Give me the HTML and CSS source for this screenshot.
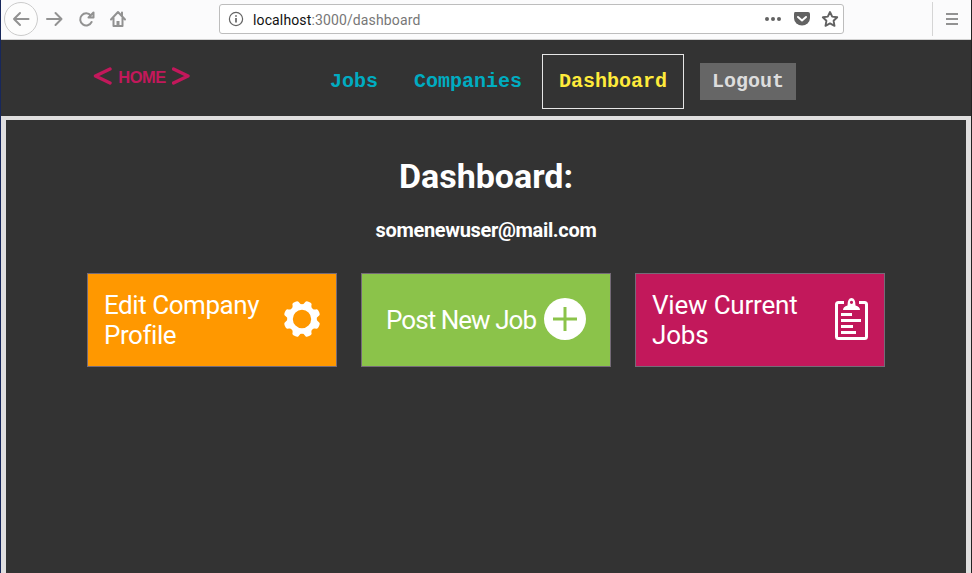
FILE: index.html
```html
<!DOCTYPE html>
<html lang="en">
<head>
<meta charset="utf-8">
<title>Dashboard</title>
<link rel="stylesheet" href="styles.css">
</head>
<body>
<div class="window">
  <div class="toolbar">
    <svg class="controls" width="140" height="39" viewBox="0 0 140 39" fill="none" stroke="#929292" stroke-width="2" stroke-linecap="round" stroke-linejoin="round">
      <circle cx="20" cy="19" r="16.5" stroke="#ccc" stroke-width="1" fill="#fdfdfd"/>
      <path d="M27.5 19H13m6-6-6 6 6 6M46 19h14.500m-6-6 6 6-6 6"/>
      <path d="M89.800 15.500A6 6 0 1 0 90.600 22M92.500 12.500v5h-5z"/>
      <path d="M110 19.500l7-7.500 7 7.500M112.500 18v8h9v-8M121 12.500v3"/>
      <path d="M117 26v-5" stroke-width="3" stroke-linecap="butt"/>
    </svg>
    <div class="address">
      <svg class="info" width="16" height="16" viewBox="0 0 16 16" fill="none" stroke="#646464">
        <circle cx="8" cy="8" r="6.600" stroke-width="1.200"/>
        <path d="M8 7v4.500M8 4.200v1.600" stroke-width="1.700"/>
      </svg>
      <span class="url">localhost<span class="path">:3000/dashboard</span></span>
      <svg class="actions" width="76" height="20" viewBox="0 0 76 20" fill="#626262">
        <circle cx="3" cy="10" r="2"/><circle cx="9" cy="10" r="2"/><circle cx="15" cy="10" r="2"/>
        <path d="M31 3h13q2 0 2 2V9a8 7.500 0 0 1-16 0V5q0-2 1-2z"/>
        <path d="M34 8l4 3.500L42 8" fill="none" stroke="#fff" stroke-width="2" stroke-linecap="round" stroke-linejoin="round"/>
        <path d="M66 3l2.200 4.600 5 .7-3.600 3.500.9 5-4.500-2.400-4.500 2.400.9-5-3.600-3.500 5-.7z" fill="none" stroke="#626262" stroke-width="1.900" stroke-linejoin="round"/>
      </svg>
    </div>
    <div class="menu"><i></i><i></i><i></i></div>
  </div>
  <nav class="nav">
    <a class="brand">
      <svg width="20" height="20" viewBox="0 0 20 20"><path d="M18 3L3.500 10 18 17"/></svg>
      <span>HOME</span>
      <svg width="20" height="20" viewBox="0 0 20 20"><path d="M1.500 3L16 10 1.500 17"/></svg>
    </a>
    <div class="links">
      <a class="link">Jobs</a>
      <a class="link">Companies</a>
      <a class="link current">Dashboard</a>
      <a class="logout">Logout</a>
    </div>
  </nav>
  <main class="main">
    <h1>Dashboard:</h1>
    <h2>somenewuser@mail.com</h2>
    <div class="cards">
      <a class="card edit">
        <span>Edit Company Profile</span>
        <svg width="36" height="36" viewBox="-18 -18 36 36">
          <circle r="12" fill="none" stroke="#fff" stroke-width="5.600"/>
          <g fill="#fff">
            <path id="tooth" d="M-6.500-12Q-3.800-14-3.300-17.200Q-3-18.500 0-18.500Q3-18.500 3.300-17.200Q3.800-14 6.500-12z" transform="rotate(22.500)"/>
            <use href="#tooth" transform="rotate(45)"/><use href="#tooth" transform="rotate(90)"/>
            <use href="#tooth" transform="rotate(135)"/><use href="#tooth" transform="rotate(180)"/>
            <use href="#tooth" transform="rotate(225)"/><use href="#tooth" transform="rotate(270)"/>
            <use href="#tooth" transform="rotate(315)"/>
          </g>
        </svg>
      </a>
      <a class="card post">
        <span>Post New Job</span>
        <svg width="42" height="42" viewBox="0 0 42 42"><circle cx="21" cy="21" r="21" fill="#fff"/><path d="M21 9v24M9 21h24" stroke="#8bc34a" stroke-width="3"/></svg>
      </a>
      <a class="card view">
        <span>View Current Jobs</span>
        <svg width="33" height="42" viewBox="0 0 33 42">
          <path d="M9 4.500H3.500Q1.500 4.500 1.500 6.500v32q0 2 2 2h26q2 0 2-2v-32q0-2-2-2H24" fill="none" stroke="#fff" stroke-width="3"/>
          <path fill="#fff" fill-rule="evenodd" d="M8 12q0-3.500 4.500-4.500 0-7.500 4-7.500t4 7.500Q25 8.500 25 12zM16.500 2.700a1.600 1.600 0 1 0 0 3.200 1.600 1.600 0 1 0 0-3.200z"/>
          <path d="M6 16.500h11M6 22.500h20M6 28.500h12M6 34.500h15" stroke="#fff" stroke-width="3"/>
        </svg>
      </a>
    </div>
  </main>
</div>
</body>
</html>
```
FILE: styles.css
```css
* { box-sizing: border-box; }
body { margin: 0; background: #333; font-family: Roboto, "Liberation Sans", sans-serif; }
.window { height: 573px; display: flex; flex-direction: column; border-left: 1px solid #17275b; border-right: 1px solid #222; overflow: hidden; }
.toolbar { height: 40px; flex: none; display: flex; background: #fbfbfc; border-bottom: 1px solid #d2d2d2; }
.controls { flex: none; }
.address { margin: 4px 0 0 78px; width: 625px; height: 30px; border: 1px solid #bdbdbd; border-radius: 3px; background: #fff; display: flex; align-items: center; padding: 0 3px 0 8px; }
.url { margin-left: 9px; font-size: 14px; letter-spacing: 0.13px; color: #111; white-space: nowrap; padding-top: 1px; }
.path { color: #777; }
.actions { margin-left: auto; }
.menu { margin: 2px 0 0 88px; height: 34px; border-left: 1px solid #d5d5d5; padding: 11px 0 0 13px; display: flex; flex-direction: column; gap: 3px; }
.menu i { width: 12px; height: 2px; background: #929292; }
.nav { height: 76px; flex: none; background: #333; display: flex; align-items: flex-start; }
.brand { margin: 26px 0 0 91px; display: flex; align-items: flex-start; width: 100px; justify-content: space-between; color: #c2185b; font: bold 16.5px/20px "Liberation Sans", sans-serif; letter-spacing: -0.5px; }
.brand path { fill: none; stroke: #c2185b; stroke-width: 3.4; stroke-linecap: round; stroke-linejoin: round; }
.brand span { padding-top: 1px; }
.links { margin: 14px 0 0 138px; display: flex; align-items: center; font: bold 20px/23px "Liberation Mono", monospace; }
.link { margin-right: 36px; color: #00acc1; }
.link.current { margin: 0 16px 0 -16px; border: 1px solid #e6e6e6; color: #ffeb3b; padding: 15px 16px 15px; width: 142px; height: 55px; }
.logout { width: 96px; height: 37px; padding: 7px 12px; background: #666; color: #ddd; }
.main { flex: 1; border: solid #e0dfdf; border-width: 4px 5px 0; background: #333; color: #fff; text-align: center; }
h1 { margin: 36px 0 0; font: bold 34px/40px Roboto, sans-serif; }
h2 { margin: 22px 0 0; font: bold 20px/24px Roboto, sans-serif; letter-spacing: -0.33px; }
.cards { margin-top: 31px; display: flex; justify-content: center; gap: 24px; }
.card { width: 250px; height: 94px; border: 1px solid #756b78; display: flex; align-items: center; justify-content: space-between; padding: 0 16px; color: #fff; font-size: 26px; line-height: 30px; text-align: left; }
.card span { width: 165px; }
.card svg { flex: none; margin-bottom: 2px; }
.edit { background: #ff9800; letter-spacing: -0.45px; }
.post { background: #8bc34a; padding: 0 24px; letter-spacing: -0.95px; }
.post span { width: auto; white-space: nowrap; }
.view { background: #c2185b; letter-spacing: -0.2px; }
```
